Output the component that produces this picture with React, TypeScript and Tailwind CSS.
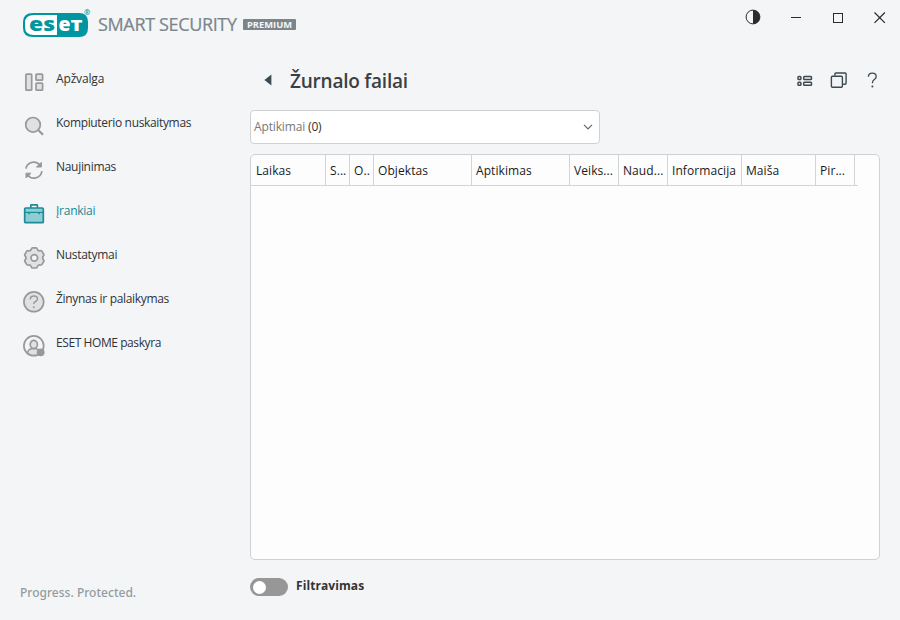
import type { ReactNode } from "react";

type NavItem = {
  label: string;
  icon: ReactNode;
  tracking: string;
  active?: boolean;
};

const navItems: NavItem[] = [
  {
    label: "Apžvalga",
    tracking: "tracking-[-0.15px]",
    icon: (
      <>
        <rect x="3.9" y="4.2" width="5.8" height="16" rx="0.8" />
        <rect x="14" y="4.2" width="6.6" height="6" rx="0.8" />
        <rect x="14" y="13.2" width="6.6" height="7" rx="0.8" />
      </>
    ),
  },
  {
    label: "Kompiuterio nuskaitymas",
    tracking: "tracking-[-0.34px]",
    icon: (
      <>
        <circle cx="11" cy="10.8" r="7.3" />
        <path d="M16.4 16.2l4.6 4.5" strokeWidth="2.2" />
      </>
    ),
  },
  {
    label: "Naujinimas",
    tracking: "tracking-[-0.3px]",
    icon: (
      <>
        <path d="M3.9 10.6a8 8 0 0 1 14.2-3.4" fill="none" />
        <path d="M19.9 13.2a8 8 0 0 1-14.4 3.6" fill="none" />
        <path d="M19.4 4.4v4.6h-5z" fill="#999" strokeWidth="1" />
        <path d="M4 20v-4.8h5z" fill="#999" strokeWidth="1" />
      </>
    ),
  },
  {
    label: "Įrankiai",
    tracking: "tracking-[-0.25px]",
    active: true,
    icon: (
      <>
        <path d="M8.8 6V3.4q0-.6.6-.6h5.4q.6 0 .6.6V6" fill="none" />
        <rect x="2.7" y="6" width="18.6" height="14.7" rx="1" />
        <path d="M2.7 10.4h18.6" strokeWidth="1.2" />
        <path d="M7 10v2.2M17.2 10v2.2" strokeWidth="1.5" />
      </>
    ),
  },
  {
    label: "Nustatymai",
    tracking: "tracking-[-0.3px]",
    icon: (
      <>
        <path
          d="M10.6 1.8h3.4q1 0 1.3 1.2Q16 5.4 18.4 4.8q1-.3 1.6.6l1.7 2.9q.5.9-.2 1.6-1.7 2 0 4 .7.7.2 1.6L20 18.4q-.6.9-1.6.6Q16 18.4 15.3 20.8q-.3 1.2-1.3 1.2h-3.4q-1 0-1.3-1.2Q8.6 18.4 6.2 19q-1 .3-1.6-.6l-1.7-2.9q-.5-.9.2-1.6 1.7-2 0-4-.7-.7-.2-1.6l1.7-2.9q.6-.9 1.6-.6Q8.6 5.4 9.3 3q.3-1.2 1.3-1.2z"
          strokeLinejoin="round"
        />
        <circle cx="12.3" cy="11.9" r="3.3" fill="#f3f5f7" />
      </>
    ),
  },
  {
    label: "Žinynas ir palaikymas",
    tracking: "tracking-[-0.32px]",
    icon: (
      <>
        <circle cx="11.8" cy="11.8" r="9.9" />
        <path
          d="M8.3 9.4q0-3.3 3.6-3.3t3.6 3q0 1.5-1.9 2.4t-1.8 2.6"
          fill="none"
          strokeWidth="1.5"
        />
        <circle cx="11.8" cy="17.2" r="1" fill="#999" stroke="none" />
      </>
    ),
  },
  {
    label: "ESET HOME paskyra",
    tracking: "tracking-[-0.42px]",
    icon: (
      <>
        <circle cx="11.8" cy="11.8" r="9.9" fill="#f3f5f7" />
        <path
          d="M5.6 19q.4-3.6 4-4.2h4.4q3.6.6 4 4.2-2.8 2.4-6.2 2.4T5.6 19z"
          strokeWidth="1.4"
        />
        <ellipse cx="11.8" cy="10.4" rx="3.6" ry="4" />
        <circle cx="18.7" cy="18.3" r="3.9" fill="#999" stroke="none" />
      </>
    ),
  },
];

const columns = [
  { label: "Laikas", width: "w-[75px]" },
  { label: "S...", width: "w-[24px]" },
  { label: "O..", width: "w-[24px]" },
  { label: "Objektas", width: "w-[98px]" },
  { label: "Aptikimas", width: "w-[98px]" },
  { label: "Veiks...", width: "w-[49px]" },
  { label: "Naud...", width: "w-[49px]" },
  { label: "Informacija", width: "w-[74px]" },
  { label: "Maiša", width: "w-[74px]" },
  { label: "Pir...", width: "w-[39px]" },
];

function Logo() {
  return (
    <svg width="300" height="40" viewBox="0 0 300 40" className="block" role="img">
      <path
        d="M33 13h46q9 0 9 9v6q0 9-9 9H33q-10 0-10-9v-6q0-9 10-9z"
        fill="#0096a1"
      />
      <path d="M34 15h23v20H34q-9 0-9-8v-4q0-8 9-8z" fill="#fff" />
      <g fontFamily="Open Sans, sans-serif" fontWeight="800" fontSize="19">
        <text x="29" y="31" fill="#0096a1" textLength="26" lengthAdjust="spacingAndGlyphs">
          es
        </text>
        <text x="58.5" y="31" fill="#fff" textLength="12" lengthAdjust="spacingAndGlyphs">
          e
        </text>
        <text x="70.5" y="31" fill="#fff" fontSize="15" textLength="12" lengthAdjust="spacingAndGlyphs">
          T
        </text>
      </g>
      <text x="84" y="14.5" fontFamily="Open Sans, sans-serif" fontWeight="700" fontSize="7.5" fill="#0096a1">
        ®
      </text>
      <text
        x="98"
        y="31"
        fontFamily="Open Sans, sans-serif"
        fontSize="18"
        fill="#7b858b"
        stroke="#7b858b"
        strokeWidth="0.2"
        textLength="139"
        lengthAdjust="spacing"
      >
        SMART SECURITY
      </text>
      <rect x="243" y="19" width="53" height="11" rx="1" fill="#7b858b" />
      <text
        x="247"
        y="27.6"
        fontFamily="Open Sans, sans-serif"
        fontWeight="700"
        fontSize="8.2"
        fill="#f3f5f7"
        textLength="45"
        lengthAdjust="spacingAndGlyphs"
      >
        PREMIUM
      </text>
    </svg>
  );
}

function WindowControls() {
  return (
    <div className="flex items-center gap-[18px] pt-[5px] pr-[9px] text-[#2b2b2b]">
      <button className="size-6">
        <svg width="24" height="24" viewBox="0 0 24 24">
          <circle cx="12" cy="12" r="6.9" fill="none" stroke="currentColor" />
          <path d="M12 5a7 7 0 0 1 0 14z" fill="currentColor" />
        </svg>
      </button>
      <button className="size-6">
        <svg width="24" height="24" viewBox="0 0 24 24" stroke="currentColor">
          <path d="M8 12.5h10" />
        </svg>
      </button>
      <button className="size-6">
        <svg width="24" height="24" viewBox="0 0 24 24" stroke="currentColor" fill="none">
          <rect x="8.5" y="8.5" width="9" height="9" />
        </svg>
      </button>
      <button className="size-6">
        <svg width="24" height="24" viewBox="0 0 24 24" stroke="currentColor" strokeWidth="1.2">
          <path d="M7.5 7.5l10.4 10.4M17.9 7.5L7.5 17.9" />
        </svg>
      </button>
    </div>
  );
}

function Sidebar() {
  return (
    <aside className="flex w-[250px] flex-col justify-between">
      <nav className="flex flex-col pt-[7px]">
        {navItems.map((item) => (
          <a key={item.label} className="flex h-11 items-center pl-[22px]">
            <svg
              width="24"
              height="24"
              viewBox="0 0 24 24"
              strokeWidth="1.7"
              className={`mt-1.5 mr-2.5 shrink-0 ${
                item.active
                  ? "fill-[#8fcdd5] stroke-[#1c8c96]"
                  : "fill-[#dfe1e3] stroke-[#999999]"
              }`}
            >
              {item.icon}
            </svg>
            <span
              className={`text-[12px] whitespace-nowrap ${item.tracking} ${
                item.active ? "font-medium text-[#168a94]" : "text-[#2f3337]"
              }`}
            >
              {item.label}
            </span>
          </a>
        ))}
      </nav>
      <p className="pb-[18px] pl-5 font-['Noto_Sans',sans-serif] text-[12px] leading-[18px] font-medium tracking-[0.02px] text-[#939ba0]">
        Progress. Protected.
      </p>
    </aside>
  );
}

function PageHeader() {
  return (
    <div className="flex h-[60px] items-center justify-between">
      <div className="flex items-center pl-[14px]">
        <svg width="8" height="12" viewBox="0 0 8 12" className="mr-[18px] fill-[#3c4a52]">
          <path d="M7.4.4v11L.4 5.9z" />
        </svg>
        <h1 className="pt-0.5 text-[19px] font-semibold tracking-[-0.22px] text-[#3a3f44]">
          Žurnalo failai
        </h1>
      </div>
      <div className="flex items-center text-[#3c4a52]">
        <svg width="24" height="24" viewBox="0 0 24 24" fill="none" stroke="currentColor" strokeWidth="1.5" className="mr-2.5">
          <rect x="6" y="8.6" width="2.9" height="2.9" rx="0.8" />
          <rect x="11.7" y="8.6" width="7.8" height="2.9" rx="0.8" />
          <rect x="6" y="14.3" width="2.9" height="2.9" rx="0.8" />
          <rect x="11.7" y="14.3" width="7.8" height="2.9" rx="0.8" />
        </svg>
        <svg width="24" height="24" viewBox="0 0 24 24" fill="none" stroke="currentColor" strokeWidth="1.4" className="mr-2.5">
          <path d="M8.9 7.8V6q0-1 1-1h9.2q1 0 1 1v9.2q0 1-1 1h-2" />
          <rect x="5.4" y="8.3" width="11" height="11" rx="1" />
        </svg>
        <svg width="24" height="24" viewBox="0 0 24 24" fill="none" stroke="currentColor" strokeWidth="1.3" className="-mr-1">
          <path d="M8.4 8.8q0-3.7 3.9-3.7t3.9 3.4q0 1.7-1.9 3t-1.9 3.8" />
          <circle cx="12.4" cy="18.4" r="1" fill="currentColor" stroke="none" />
        </svg>
      </div>
    </div>
  );
}

function LogTable() {
  return (
    <div className="mt-2.5 h-[406px] rounded-[5px] border border-[#cfd1d3] bg-[#fdfdfd]">
      <div className="flex h-[31px] w-[607px] border-b border-[#d2d4d6]">
        {columns.map((col) => (
          <div
            key={col.label}
            className={`flex shrink-0 items-center overflow-hidden border-r border-[#d2d4d6] pt-0.5 pl-1 text-[12px] tracking-[0.08px] whitespace-nowrap text-[#1a1a1a] first:pl-[5px] ${col.width}`}
          >
            {col.label}
          </div>
        ))}
      </div>
    </div>
  );
}

export default function App() {
  return (
    <div className="flex h-[620px] w-[900px] flex-col overflow-hidden bg-[#f3f5f7] font-['Open_Sans',sans-serif]">
      <header className="flex h-[50px] items-start justify-between">
        <Logo />
        <WindowControls />
      </header>

      <div className="flex flex-1">
        <Sidebar />

        <main className="w-[630px]">
          <PageHeader />

          <button className="flex h-[34px] w-[350px] items-center justify-between rounded-[4px] border border-[#cfd1d3] bg-white pr-[6px] pl-[3px] text-[12px] tracking-[-0.15px] text-[#777777]">
            <span>
              Aptikimai <span className="text-[#333333]">(0)</span>
            </span>
            <svg width="10" height="6" viewBox="0 0 10 6" fill="none" stroke="#666" strokeWidth="1.2">
              <path d="M1 .8l4 4 4-4" />
            </svg>
          </button>

          <LogTable />

          {/* Filter toggle */}
          <div className="flex items-center pt-[18px]">
            <button className="flex h-[18px] w-[38px] items-center rounded-full bg-[#979797] pl-[3px]">
              <span className="size-[13px] rounded-full bg-white" />
            </button>
            <span className="-mt-[3px] ml-2 text-[12px] leading-[18px] font-bold tracking-[0.08px] text-[#333333]">
              Filtravimas
            </span>
          </div>
        </main>
      </div>
    </div>
  );
}
